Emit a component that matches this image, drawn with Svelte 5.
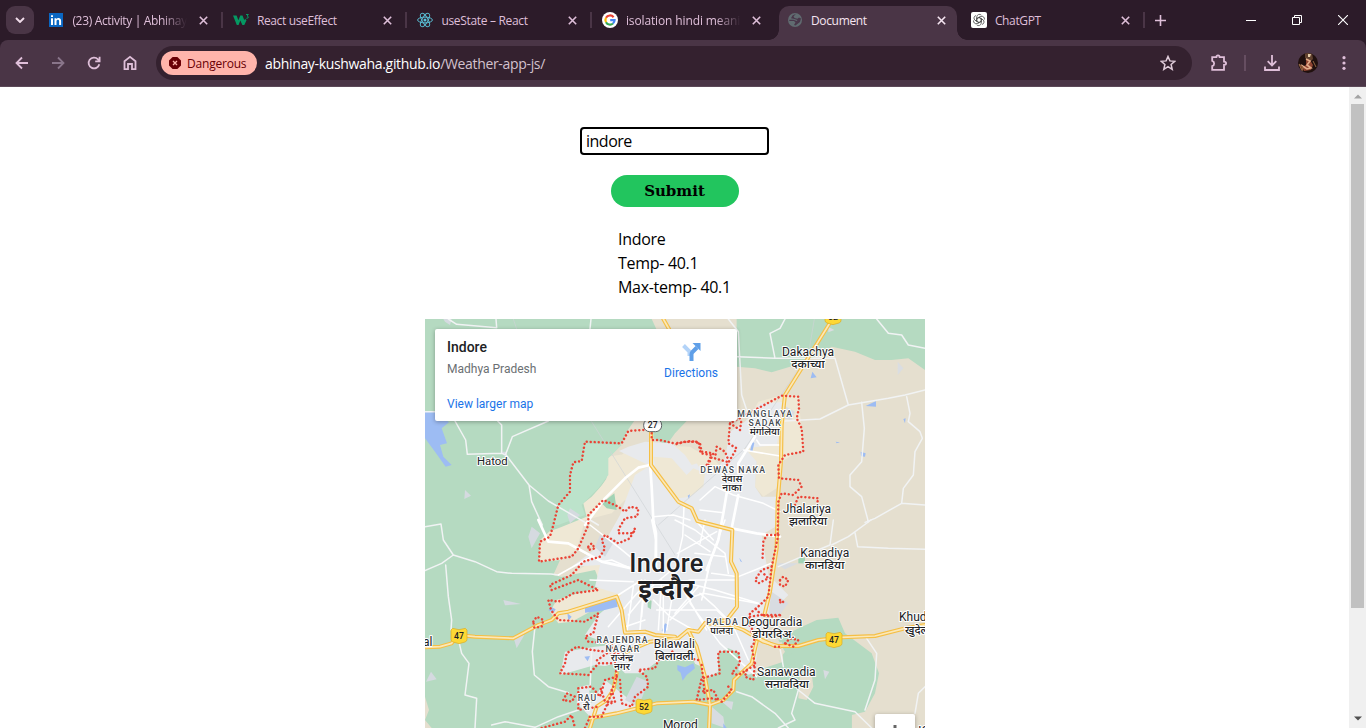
<script>
  const tabs = [
    { icon: 'linkedin', title: '(23) Activity | Abhinay Kushwaha', spacing: -0.33 },
    { icon: 'w3', title: 'React useEffect', spacing: -0.36 },
    { icon: 'react', title: 'useState – React', spacing: -0.32 },
    { icon: 'google', title: 'isolation hindi meaning', spacing: -0.12, last: true },
    { icon: 'globe', title: 'Document', spacing: -0.35, active: true },
    { icon: 'gpt', title: 'ChatGPT', spacing: -0.35 }
  ];

  // The map is drawn in tiles; one map unit is a third of a pixel.
  const origin = { A: [0, 0], B: [750, 0], C: [0, 615], D: [750, 615], E: [495, 315], F: [495, 735] };
  const at = (t) => `translate(${origin[t][0]} ${origin[t][1]})`;

  const land = [
    ['A', '#e5dfcf', 'M680 12 694 42 H935 V12Z M640 300 H1500 V1239 H1280 V1200 L1320 1190 1350 1135 1362 1075 1340 1015 1260 955 1240 908 1175 915 1110 945 1060 975 1080 1010 1050 1050 990 1080 800 1000 560 780 550 430 590 385 605 350Z'],
    ['B', '#e5dfcf', 'M185 155 240 160 290 172 345 155 420 125 470 95 540 110 600 135 650 135 700 130 750 165V320H185Z'],
    ['C', '#efe8d5', 'M545 -190 545 -120 500 -70 475 -50 485 -10 400 25 375 33 345 60 342 125 410 120 385 165 410 170 510 150 530 200 440 225 395 240 375 275 400 310 440 305 560 240 750 200 750 -220Z'],
    ['C', '#e5dfcf', 'M480 0 560 -20 600 -60 630 -40 610 20 520 110 430 170 385 165 405 120 455 90Z M0 530 12 570 0 600Z M0 600 20 624H0Z'],
    ['B', '#b5dac1', 'M-65 318H35L0 355-25 390-65 370Z'],
    ['E', '#efe8d5', 'M100 100 180 75 300 80 350 110 370 200 340 300 250 210 190 135 60 180 0 260 20 220Z'],
    ['B', '#efe8d5', 'M330 238 370 242 385 400 320 440 305 520 265 545 240 515 245 440 170 400 250 260Z'],
    ['A', '#e8eaed', 'M675 452 582 408 610 395 660 380 740 385 780 420 800 450 830 440 860 480 900 430 915 350 960 320 1005 265 1085 260 1055 390 960 400 995 440 990 515 1010 545 1060 545 1060 630 1010 660 1030 780 1090 840 1070 860 1020 910 1000 980 990 1070 950 1090 920 1050 940 1010 880 1010 880 1070 830 1100 800 1020 700 1040 690 1080 660 1120 650 1175 500 1210 455 1165 465 1115 560 1095 600 1060 510 1050 405 1080 420 1010 510 995 560 990 480 960 520 900 590 840 510 815 525 750 440 755 540 680 585 600 630 480Z'],
    ['E', '#efe8d5', 'M190 110 245 115 290 165 310 145 345 160 340 200 300 230 265 235 200 160Z M300 100 350 90 400 150 340 160Z'],
    ['F', '#e8eaed', 'M60 330 180 330 200 350 170 400 130 440 20 470 0 450 20 400Z'],
    ['A', '#bce3cb', 'M475 385 590 390 550 430 550 480 520 520 470 570 480 600 400 630 385 630 400 575 430 530 440 445 475 430Z'],
    ['A', '#a3d3b5', 'M530 565 568 535 575 585 545 580Z'],
    ['D', '#b5dac1', 'M0 405 80 440 85 490 130 465 130 400 160 385 195 400 190 450 235 470 300 420 355 400 362 450 370 500 400 520 530 580 530 624 0 624Z'],
    ['C', '#b5dac1', 'M500 450 570 430 600 460 650 460 690 430 750 410 750 624H540L640 560 590 520 540 480 500 550 490 500Z'],
    ['D', '#e5dfcf', 'M245 395 320 365 325 425 250 450Z M375 460 410 460 415 500 395 540 370 535Z'],
    ['D', '#a3d3b5', 'M370 113H390V130H370Z'],
    ['C', '#a3d3b5', 'M668 238 680 242 678 268 668 262Z'],
    ['A', '#d5dae0', 'M55 12H80L75 30 60 20Z M225 410H245V430Z M120 525 138 542 118 552Z M435 580 465 600 435 625 427 600Z'],
    ['C', '#d5dae0', 'M320 20 345 40 320 85 310 50Z M235 240 288 252 240 256Z M265 350 298 345 275 385Z M18 455 35 478 3 485Z M635 470 670 485 640 560 600 540Z M525 45 570 60 540 110 510 80Z'],
    ['B', '#dadde1', 'M668 140 685 160 668 180Z M460 35 478 45 460 52Z M325 270 360 290 350 315 320 310Z'],
    ['D', '#d8dce1', 'M300 130 370 130 330 148Z M290 215 340 250 310 290 280 280Z M445 450 463 455 450 478Z M110 560 145 590 150 624 110 610Z M135 540 175 545 170 570Z']
  ];

  const water = [
    ['A', 'M0 290 30 290 72 322 50 340 66 385 45 390 55 425 80 450 62 455 30 410 0 370Z'],
    ['C', 'M480 262 575 235 578 260 530 272 480 278Z M380 262 392 268 385 280 370 270Z M427 280 440 290 430 302Z M478 410 495 408 488 424Z'],
    ['F', 'M262 315 285 322 310 310 315 325 290 345 278 362 272 338 262 330Z M225 190 235 195 225 220 215 212Z'],
    ['B', 'M407 190 412 170 425 187Z M572 273 603 258 603 275Z M557 410 572 415 570 425 558 424Z M232 380 238 384 232 410 225 408Z M685 312 692 310 690 325Z M482 380 495 382 485 385Z M38 542 45 538 42 552Z'],
    ['D', 'M193 113 202 127 196 124Z M145 610 155 624H145Z']
  ];

  const minor = [
    ['A', 'M70 12 95 28 215 38 213 12 M498 12 495 42 M0 290 30 290 M90 318 122 375 127 418 230 415 238 418 M218 318 230 330 230 412 M370 318 262 365 242 418 312 510 370 558 480 622 M312 510 320 560 352 630'],
    ['C', 'M0 20 48 12 55 60 85 105 50 130 0 152 M85 105 150 125 215 155 260 160 378 162 400 165 M62 135 70 230 80 300 78 330 M103 370 110 400 132 430 120 525 155 535 150 624 M330 320 322 395 328 465 370 500 430 518 M200 615 240 605 330 622 M330 622 400 590 460 570 M500 390 495 510 M495 0 520 15'],
    ['B', 'M160 12 190 50 200 240 230 330 M187 125 300 130 285 55 315 40 330 12 M330 318 435 312 520 270 640 250 690 240 750 225 M480 130 520 270 M300 130 480 130 M605 12 640 55 680 60 700 90 750 100 M560 262 568 340 560 440 525 480 525 515 560 545 580 620 M695 245 705 295 700 320 735 350 742 370 720 410 715 480 685 520 680 565 750 570 M680 565 600 610 570 622'],
    ['D', 'M588 0 520 50 470 75 M475 0 465 75 380 110 310 140 M540 38 548 80 640 85 750 88 M575 355 605 400 600 480 570 570 M185 515 230 530 300 580 340 624 M370 510 350 580 360 600 310 624 M370 510 420 550 540 575 590 624 M315 385 325 440 M750 500 730 520 720 580']
  ];

  const major = [
    ['A', 'M480 630 540 550 600 490 640 458 675 450'],
    ['E', 'M180 130 185 200 190 300 198 340 198 450 M495 50 445 130 445 160 M445 225 425 325 M410 220 400 280 385 360 350 450 M425 325 500 340 570 350'],
    ['C', 'M370 65 430 70 530 125 620 145 M340 0 370 65']
  ];
  const streets = [
    ['E', 'M0 315 90 385 120 410 M190 290 250 285 300 300 M282 260 278 350 262 420 M330 270 400 278 M330 240 375 200 430 225 520 250 570 275 M320 305 370 360 M262 400 380 335 M285 345 360 395 M460 90 570 108 M500 60 510 75 570 75'],
    ['C', 'M430 70 500 110 480 120 400 165 M530 125 560 120 640 155 M580 225 650 180 M680 0 692 60 690 140 M610 285 680 200 740 150 M600 320 660 300 M660 180 650 290 M710 180 700 330'],
    ['F', 'M55 200 145 95 M130 80 110 220 M160 90 150 210 M0 60 130 65 M190 120 240 170 310 210 M180 100 300 60 380 60 440 60 M220 110 220 220 M240 180 310 110 340 100 360 0 M340 100 420 115 500 130 M310 60 300 130 390 250 500 350 M200 150 320 150 380 150 410 180 M260 30 230 210 M280 90 350 210 M70 240 160 230'],
    ['D', 'M0 0 60 30 150 100 160 160 M90 0 75 70 M150 0 110 110 80 240 M60 100 150 110 M110 160 190 170 240 150 300 125 M0 180 120 210 250 250 M75 220 120 260 150 290 180 330 220 420 M0 280 70 200']
  ];

  const highways = [
    ['A', 'M678 350 678 450 760 560 800 580 817 618 922 645 918 740 935 775 936 875 905 915 840 925'],
    ['B', 'M472 12 330 240 320 330 318 440 308 560 305 700 285 830 268 900'],
    ['A', 'M715 12 732 42'],
    ['C', 'M0 382 45 380 80 370 100 345 150 350 265 355 340 315 380 300 400 280 430 275 575 230 590 270 600 338 660 335 690 345 750 350'],
    ['F', 'M110 275 180 245 265 235 295 210 325 215 345 190 420 195 460 210 520 245 570 260 M295 212 320 260 345 350 360 435 357 504 M500 245 485 310 432 360 430 390 400 420 360 435 310 425 200 430 80 460 0 475 M80 340 70 390 50 420 20 440 0 504'],
    ['D', 'M240 350 300 378 370 378 430 360 500 352 600 348 690 325 750 315']
  ];

  const border = [
    ['A', 'M655 345 610 348 590 385 480 380 470 438 445 442 435 480 435 530 400 570 385 630 375 665 345 680 342 740 440 725 460 700 490 630 490 600 535 555 580 575 600 590 615 575 640 580 637 604 600 610 582 640 580 655 625 655 630 640 615 670 580 685 540 660 530 675 540 700 525 725 475 740 440 780 375 810 380 825 460 795 520 825 445 835 400 860 370 855 378 885 400 915 480 920 520 895 505 955 480 965 490 980 560 985 560 1005 510 1040 M680 355 680 375 705 375 755 387 780 380 820 380 827 415 860 420 845 450'],
    ['A', 'M490 695 500 685 510 700 490 705Z M325 920 335 905 355 915 350 935 328 938Z'],
    ['C', 'M580 400 500 390 455 380 425 400 420 430 405 460 490 465 520 430 570 430 575 470 550 545 530 590 495 590 480 624 M575 470 540 480 525 530 500 500 460 505 460 570 520 560 M415 540 425 520 450 530 440 545Z M585 480 590 550 620 560 630 530 670 500 665 470 640 450 690 445 700 420 750 390 M350 624 420 605 440 585 450 624 M560 545 540 545 525 500 M560 510 570 545 545 555'],
    ['B', 'M100 450 115 415 80 410 75 385 50 378 0 385 M150 460 185 400 160 385 165 325 230 290 320 242 370 245 372 280 365 310 380 340 385 410 330 420 310 450 312 490 370 495 380 515 355 540 320 535 310 560 308 660 275 660 265 680 262 740 M155 440 120 430 125 395 150 410 160 435 M165 325 195 345 200 310 M360 570 370 545 430 550 425 570'],
    ['D', 'M310 45 290 140 280 230 255 255 225 280 220 310 240 340 235 380 M290 140 260 150 240 180 250 190 280 175 265 160 M315 180 325 170 340 180 330 200 315 195Z M315 240 325 245 317 250Z M265 285 320 285 290 290Z M225 290 260 285 240 265 M240 340 220 330 M300 380 320 380 M330 370 345 355 370 360 355 380Z M230 380 240 435 190 465 170 460 195 430 190 395 130 395 130 420 135 460 80 475 65 540 110 535 130 540 115 510 75 515 M80 435 90 530 M160 500 170 510 140 545 M240 430 235 480 210 470 215 450 M10 410 70 420']
  ];

  const labels = [
    ['Hatod', 202, 450, 34], ['Dakachya', 1149, 124, 36],
    ['Jhalariya', 1146, 594, 36], ['Kanadiya', 1199, 727, 36],
    ['Deoguradia', 1040, 934, 36], ['Sanawadia', 1084, 1084, 36],
    ['Bilawali', 748, 999, 36], ['Morod', 766, 1243, 36]
  ];
  const hindi = [
    ['दकाच्या', 1149, 160, 100, 34], ['देवास', 921, 502, 62, 27], ['नाका', 921, 529, 58, 27],
    ['मंगलिया', 1019, 361, 90, 27], ['झलारिया', 1149, 630, 114, 34],
    ['कानडिया', 1199, 762, 118, 34], ['डोगरदिअ.', 1045, 970, 128, 34],
    ['सनावदिया', 1086, 1120, 132, 34], ['बिलावली', 748, 1036, 116, 34],
    ['राजेन्द्र', 591, 1038, 68, 27], ['नगर', 591, 1065, 48, 27],
    ['पालदा', 890, 956, 68, 27], ['रौ', 484, 1184, 20, 27]
  ];
  const areas = [
    ['MANGLAYA', 1019, 305, 164], ['SADAK', 1019, 332, 97], ['DEWAS NAKA', 923, 473, 194],
    ['RAJENDRA', 591, 984, 153], ['NAGAR', 592, 1011, 101], ['PALDA', 891, 930, 94], ['RAU', 486, 1158, 55]
  ];
  const shields = [[102, 963, '47'], [1227, 975, '47'], [657, 1175, '52'], [1224, 6, '52']];
</script>

<div class="browser">
  <header class="tabbar">
    <button class="search" aria-label="Search tabs"><svg width="10" height="6" viewBox="0 0 10 6"><path d="M1 1 5 5 9 1" fill="none" stroke="currentColor" stroke-width="1.9" /></svg></button>
    <div class="tabs">
      {#each tabs as t}
        <div class="tab" class:active={t.active} class:nosep={t.last || t.active}>
          <span class="fav">
            {#if t.icon === 'linkedin'}
              <svg width="16" height="16" viewBox="0 0 16 16"><rect x="1" y="1" width="14" height="14" fill="#0a66c2" /><path d="M3 6.2h2V13H3zM3 3.2h2v1.9H3zM6.5 6.2h1.9v1c1-1.7 4.7-1.8 4.7 1.7V13h-2V9.3c0-2.1-2.6-1.9-2.6 0V13h-2z" fill="#fff" /></svg>
            {:else if t.icon === 'w3'}
              <svg width="17" height="16" viewBox="0 0 17 16"><path d="M0 3.500H3.600L5.400 8.300 7.300 3.500H9.500L11.300 8.300 12 6.800 13.500 8.200 11.300 13H9.400L7.300 8.400 5.600 13H3.800Z" fill="#059862" /><path d="M13 2.500H15.400L14.100 4Q16.300 4.600 14.800 6.100L13.400 6.300" fill="none" stroke="#059862" stroke-width="1" /></svg>
            {:else if t.icon === 'react'}
              <svg width="16" height="16" viewBox="0 0 16 16"><g fill="none" stroke="#58b9cf" stroke-width="1"><ellipse cx="8" cy="8" rx="7.4" ry="2.9" /><ellipse cx="8" cy="8" rx="7.4" ry="2.9" transform="rotate(60 8 8)" /><ellipse cx="8" cy="8" rx="7.4" ry="2.9" transform="rotate(120 8 8)" /></g><circle cx="8" cy="8" r="1.5" fill="#58c4dc" /></svg>
            {:else if t.icon === 'google'}
              <svg width="16" height="16" viewBox="0 0 16 16"><circle cx="8" cy="8" r="8" fill="#fff" /><g fill="none" stroke-width="2.2"><path d="M11.6 5.2A4.6 4.6 0 0 0 4 5.8" stroke="#ea4335" /><path d="M4 5.8a4.6 4.6 0 0 0 0 4.4" stroke="#fbbc05" /><path d="M4 10.2a4.6 4.6 0 0 0 7 1.3" stroke="#34a853" /><path d="M11 11.5A4.6 4.6 0 0 0 12.6 8.1H8.2" stroke="#4285f4" /></g></svg>
            {:else if t.icon === 'globe'}
              <svg width="16" height="16" viewBox="0 0 16 16"><circle cx="8" cy="8" r="7" fill="#606b70" /><path d="M9 1.800 6.500 4.500 7.500 6 10.500 6.800 12 5.500 14 6.500 13 10 11 11.500 8.500 13.500 7 13 8.500 10.500 7 9 2.300 9 2.300 7.700 6.500 7.800 9.700 9 10.500 8 6.500 6.800 4 6.200 5.500 3.500Z" fill="#49364a" /></svg>
            {:else}
              <svg width="16" height="16" viewBox="0 0 16 16"><rect width="16" height="16" rx="2" fill="#fff" /><g fill="none" stroke="#444" stroke-width=".75">{#each [0, 60, 120, 180, 240, 300] as a}<path d="M5.800 6.700V4.600A2.700 2.700 0 0 1 10.300 3.100M5.800 6.700 8 5.400 11.200 7.300" transform="rotate({a} 8 8)" />{/each}</g></svg>
            {/if}
          </span>
          <span class="title" class:fade={t.title.length > 20} style="letter-spacing:{t.spacing}px">{t.title}</span>
          <svg class="close" width="9" height="9" viewBox="0 0 9 9"><path d="M.8.8 8.2 8.2M8.2.8.8 8.2" stroke="currentColor" stroke-width="1.6" /></svg>
        </div>
      {/each}
    </div>
    <svg class="plus" width="11" height="11" viewBox="0 0 11 11"><path d="M5.5 0V11M0 5.5H11" stroke="currentColor" stroke-width="1.6" /></svg>
    <div class="win">
      <svg width="10" height="10" viewBox="0 0 10 10"><path d="M0 5.5H10" stroke="#fff" /></svg>
      <svg width="10" height="10" viewBox="0 0 10 10"><path d="M.5 2.5h7v7h-7zM2.5 2.5v-2h7v7h-2" fill="none" stroke="#fff" /></svg>
      <svg width="10" height="10" viewBox="0 0 10 10"><path d="M0 0 10 10M10 0 0 10" stroke="#fff" stroke-width="1.1" /></svg>
    </div>
  </header>

  <nav class="toolbar">
    <svg class="nav" width="16" height="16" viewBox="0 0 16 16"><path d="M14 8H3M8 2.5 2.5 8 8 13.500" /></svg>
    <svg class="nav dim" width="16" height="16" viewBox="0 0 16 16"><path d="M2 8H13M8 2.500 13.500 8 8 13.500" /></svg>
    <svg class="nav" width="16" height="16" viewBox="0 0 16 16"><path d="M13.300 9.200A5.400 5.400 0 1 1 12 4.300L13.500 6M13.600 1.800V6.300H9.200" /></svg>
    <svg class="nav" width="16" height="16" viewBox="0 0 16 16"><path d="M2.500 6.200 8 1.900 13.500 6.200V14.100H10V9H6V14.100H2.500Z" /></svg>
    <div class="omnibox">
      <span class="danger">
        <svg width="12" height="12" viewBox="0 0 12 12"><path d="M3.600 0H8.400L12 3.600V8.400L8.400 12H3.600L0 8.400V3.600Z" fill="#690005" /><path d="M4 4 8 8M8 4 4 8" stroke="#ffb4ab" stroke-width="1.300" /></svg>
        Dangerous
      </span>
      <span class="url"><span>abhinay-kushwaha.github.io</span>/Weather-app-js/</span>
      <svg class="star" width="16" height="16" viewBox="0 0 16 16"><path d="M8 1.500 9.900 5.900 14.800 6.300 11.100 9.500 12.200 14.300 8 11.700 3.800 14.300 4.900 9.500 1.200 6.300 6.100 5.900Z" /></svg>
    </div>
    <div class="actions">
      <svg class="ext" width="18" height="18" viewBox="0 0 18 18"><path d="M2.200 3.200H6.400C6.400 .8 9.600 .8 9.600 3.200H14V7.600C16.800 7.600 16.800 10.800 14 10.800V15.800H2.200V12.200C4.800 11.500 4.800 7.500 2.200 6.800Z" /></svg>
      <i class="sep"></i>
      <svg class="dl" width="18" height="18" viewBox="0 0 18 18"><path d="M9 1V11.500M4.700 7.200 9 11.500 13.300 7.200M2 12.500V16H16V12.500" /></svg>
      <svg class="avatar" width="20" height="20" viewBox="0 0 20 20"><defs><clipPath id="round"><circle cx="10" cy="10" r="10" /></clipPath></defs><g clip-path="url(#round)"><rect width="20" height="20" fill="#20100e" /><path d="M7 0h7l1 6-3 3-5-4z" fill="#60412f" /><path d="M10 1h3l-1 3h-2z" fill="#e5cda8" /><path d="M8 6 12 7 15 12 13 17 6 18 4 14 8 12z" fill="#8e4431" /><path d="M8 6 12 8 9 12 13 15 9 16 3 12" fill="none" stroke="#e2ab88" stroke-width="1.600" /><path d="M1 11 5 14 4 18zM15 8 18 14" stroke="#926743" fill="#824329" /></g></svg>
      <svg class="more" width="4" height="14" viewBox="0 0 4 14"><circle cx="2" cy="1.700" r="1.600" /><circle cx="2" cy="7" r="1.600" /><circle cx="2" cy="12.300" r="1.600" /></svg>
    </div>
  </nav>

  <div class="viewport">
    <main>
      <input type="text" value="indore" aria-label="City" />
      <button class="submit">Submit</button>
      <div class="report"><p>Indore</p><p>Temp- 40.1</p><p>Max-temp- 40.1</p></div>
      <section class="map">
        <svg width="500" height="409" viewBox="0 12 1500 1227">
          <rect y="12" width="1500" height="1227" fill="#b5dac1" />
          {#each land as [t, c, d]}<path transform={at(t)} {d} fill={c} />{/each}
          {#each water as [t, d]}<path transform={at(t)} {d} fill="#9dbcf3" />{/each}
          <g fill="none" stroke-linejoin="round" stroke-linecap="round">
            <path d="M500 320 700 640 750 720 M265 12 275 42 M1168 12 1150 120 960 400 700 630" stroke="#cfd3d6" stroke-width="2" />
            {#each minor as [t, d]}<path transform={at(t)} {d} stroke="#f1f3f4" stroke-width="4.500" />{/each}
            {#each streets as [t, d]}<path transform={at(t)} {d} stroke="#fff" stroke-width="4.500" />{/each}
            {#each major as [t, d]}<path transform={at(t)} {d} stroke="#fff" stroke-width="8" />{/each}
            {#each highways as [t, d]}<path transform={at(t)} {d} stroke="#f5bf45" stroke-width="12" />{/each}
            {#each highways as [t, d]}<path transform={at(t)} {d} stroke="#fbe8b8" stroke-width="5" />{/each}
            {#each border as [t, d]}<path transform={at(t)} {d} stroke="#ea4335" stroke-width="7.400" stroke-dasharray="0.100 11.900" />{/each}
          </g>
          {#each shields as [x, y, n]}
            <path transform="translate({x} {y})" d="M-19-23 0-19 19-23 24-18V10Q24 16 18 18L0 23-18 18Q-24 16-24 10V-18Z" fill="#fdd835" stroke="#d9ab24" stroke-width="2" />
            <text class="num" {x} y={y + 9}>{n}</text>
          {/each}
          <rect x="656" y="312" width="54" height="38" rx="18" fill="#fff" stroke="#5f6368" stroke-width="3" />
          <text class="num" x="683" y="339">27</text>
          <g class="label">
            {#each hindi as [s, x, y, w, size]}<text class="dev" {x} {y} font-size={size} textLength={w} lengthAdjust="spacingAndGlyphs">{s}</text>{/each}
            {#each labels as [s, x, y, size]}<text {x} {y} font-size={size}>{s}</text>{/each}
            <text x="8" y="993" font-size="36">al</text>
            <text class="start" x="1422" y="919" font-size="36">Khudel</text>
            <text class="start dev" x="1440" y="957" font-size="34">खुदेल</text>
            <text class="start" x="1480" y="1260" font-size="36">Kampel</text>
          </g>
          <g class="area">{#each areas as [s, x, y, w]}<text {x} {y} textLength={w}>{s}</text>{/each}</g>
          <text class="city" x="724" y="770" textLength="222">Indore</text>
          <text class="city hi" x="724" y="849" textLength="168" lengthAdjust="spacingAndGlyphs">इन्दौर</text>
        </svg>
        <aside class="place">
          <div class="about"><h1>Indore</h1><p>Madhya Pradesh</p><a href="#map">View larger map</a></div>
          <div class="directions">
            <svg width="20" height="20" viewBox="0 0 20 20"><path d="M2.500 3.500 8.500 9.500V14" fill="none" stroke="#b3d3f8" stroke-width="4" /><path d="M10.500 19V12.500Q10.500 11 11.500 10L16 5.500" fill="none" stroke="#5f9fe8" stroke-width="4" /><path d="M11.500 1H19.500V9Z" fill="#5f9fe8" /></svg>
            <a href="#map">Directions</a>
          </div>
        </aside>
        <button class="zoom" aria-label="Zoom in"><svg width="12" height="12" viewBox="0 0 12 12"><path d="M6 0V12M0 6H12" stroke="#666" stroke-width="3" /></svg></button>
      </section>
    </main>
    <div class="scrollbar">
      <svg width="8" height="5" viewBox="0 0 8 5"><path d="M0 4.500 4 .5 8 4.500Z" fill="#a3a3a3" /></svg>
      <div class="thumb"></div>
      <svg class="down" width="8" height="5" viewBox="0 0 8 5"><path d="M0 .5 4 4.500 8 .5Z" fill="#505050" /></svg>
    </div>
  </div>
</div>

<style>
  :global(body) { margin: 0; overflow: hidden; }
  * { box-sizing: border-box; }
  p, h1 { margin: 0; }
  button { border: 0; padding: 0; }
  svg { display: block; flex: none; }
  .browser { width: 1366px; height: 728px; display: flex; flex-direction: column; overflow: hidden; background: #2c1b29; font-family: "Open Sans", "Noto Sans", sans-serif; color: #dfbfd9; }
  .tabbar { height: 40px; display: flex; align-items: center; flex: none; }
  .search { width: 28px; height: 28px; margin: 0 7px 0 6px; border-radius: 9px; background: #4a3546; color: #f1dcea; display: grid; place-items: center; }
  .tabs { display: flex; height: 40px; }
  .tab { position: relative; width: 184.5px; height: 40px; display: flex; align-items: center; padding: 0 14px 0 7.4px; font-size: 12px; }
  .tab::after { content: ""; position: absolute; right: 3px; top: 12px; width: 2px; height: 16px; background: #4a3546; }
  .tab.nosep::after { display: none; }
  .tab.active { color: #f5e5f1; padding-left: 8px; }
  .tab.active::before { content: ""; position: absolute; left: 0; right: 6.5px; top: 6px; bottom: 0; background: #4a3546; border-radius: 10px 10px 0 0; }
  .tab.active > * { position: relative; }
  .tab.active::after { display: block; left: -10px; right: -3.5px; width: auto; top: 30px; height: 10px; background: radial-gradient(circle at 0 0, transparent 9.5px, #4a3546 10px) left / 10px 10px no-repeat, radial-gradient(circle at 100% 0, transparent 9.5px, #4a3546 10px) right / 10px 10px no-repeat; }
  .fav { width: 24px; flex: none; }
  .title { width: 115px; white-space: nowrap; overflow: hidden; line-height: 20px; padding-top: 2px; }
  .title.fade { mask-image: linear-gradient(90deg, #000 78%, transparent); }
  .close { margin-left: auto; margin-right: 4px; }
  .plus { margin-left: 7px; }
  .win { margin-left: auto; margin-right: 18px; display: flex; gap: 36px; }
  .toolbar { height: 47px; flex: none; display: flex; align-items: center; background: #4a3546; border-radius: 8px 8px 0 0; border-bottom: 1px solid #5c4958; padding-left: 14px; }
  .nav { margin-right: 20px; fill: none; stroke: currentColor; stroke-width: 1.800; }
  .dim { color: #89758a; }
  .omnibox { width: 1036px; height: 34px; border-radius: 17px; background: #34212f; margin-left: -2px; padding: 0 16px 0 5px; display: flex; align-items: center; }
  .danger { width: 96px; height: 24px; border-radius: 12px; background: #ffb4ab; color: #690005; font-size: 12px; display: flex; align-items: center; gap: 6px; padding-left: 8px; letter-spacing: -.2px; }
  .url { margin-left: 8px; font-size: 14px; color: #d3c1ce; letter-spacing: -.33px; }
  .url span { color: #fff; }
  .star { margin-left: auto; fill: none; stroke: #e0ccda; stroke-width: 1.500; }
  .actions { display: flex; align-items: center; margin-left: 18px; flex: 1; }
  .ext, .dl { fill: none; stroke: currentColor; stroke-width: 1.800; }
  .sep { width: 2px; height: 16px; background: #664e61; margin: 0 17px 0 16px; }
  .avatar { margin-left: 17px; }
  .more { margin-left: 24px; fill: currentColor; }
  .viewport { flex: 1; min-height: 0; display: flex; background: #fff; color: #000; }
  main { flex: 1; display: flex; flex-direction: column; align-items: center; padding-top: 40px; font-size: 16px; }
  input { width: 189px; height: 28px; border: 2px solid #000; border-radius: 4px; padding: 0 4px; font: inherit; outline: 0; letter-spacing: -.5px; flex: none; }
  .submit { width: 128px; height: 32px; flex: none; margin: 20px 0 20px 1px; padding-right: 1px; border-radius: 16px; background: #22c55e; color: #000; font: bold 15px "DejaVu Serif", serif; }
  .report { width: 113px; height: 73px; flex: none; line-height: 24px; letter-spacing: -.3px; white-space: nowrap; }
  .map { position: relative; width: 500px; height: 409px; margin: 19px 0 0 1px; flex: none; overflow: hidden; font-family: Roboto, "Noto Sans Devanagari", "Noto Sans", sans-serif; }
  .label text, .area text, .city, .num { text-anchor: middle; fill: #202124; }
  .label text, .area text { paint-order: stroke; stroke: #fff; stroke-width: 6px; stroke-linejoin: round; }
  .label .start { text-anchor: start; }
  .label .dev { font-weight: 500; }
  .area text { font-size: 26px; font-weight: 500; fill: #444a50; }
  .city { font-size: 76px; font-weight: 500; paint-order: stroke; stroke: #fff; stroke-width: 6px; }
  .hi { font-size: 80px; font-weight: 700; }
  .num { font-size: 26px; font-weight: 500; }
  .place { position: absolute; left: 10px; top: 10px; width: 302px; height: 92px; background: #fff; border-radius: 2px; box-shadow: 0 1px 4px rgba(0,0,0,.3); padding: 10px 19px 0 12px; display: flex; justify-content: space-between; font-size: 12px; line-height: 16px; }
  h1 { font-size: 14px; font-weight: 500; line-height: 17px; color: #202124; }
  .about p { margin-top: 5px; color: #6b6f73; }
  a { color: #1a73e8; text-decoration: none; display: block; }
  .about a { margin-top: 19px; }
  .directions { display: flex; flex-direction: column; align-items: center; padding-top: 3px; }
  .directions a { margin-top: 3px; }
  .zoom { position: absolute; left: 450px; top: 395px; width: 40px; height: 40px; border-radius: 2px; background: #fff; box-shadow: 0 1px 4px rgba(0,0,0,.3); display: flex; justify-content: center; padding-top: 11px; }
  .scrollbar { width: 17px; background: #f0f0f0; display: flex; flex-direction: column; align-items: center; padding-top: 7px; }
  .thumb { width: 13px; height: 504px; margin-top: 5px; background: #c1c1c1; }
  .down { margin-top: auto; margin-bottom: 7px; }
</style>
